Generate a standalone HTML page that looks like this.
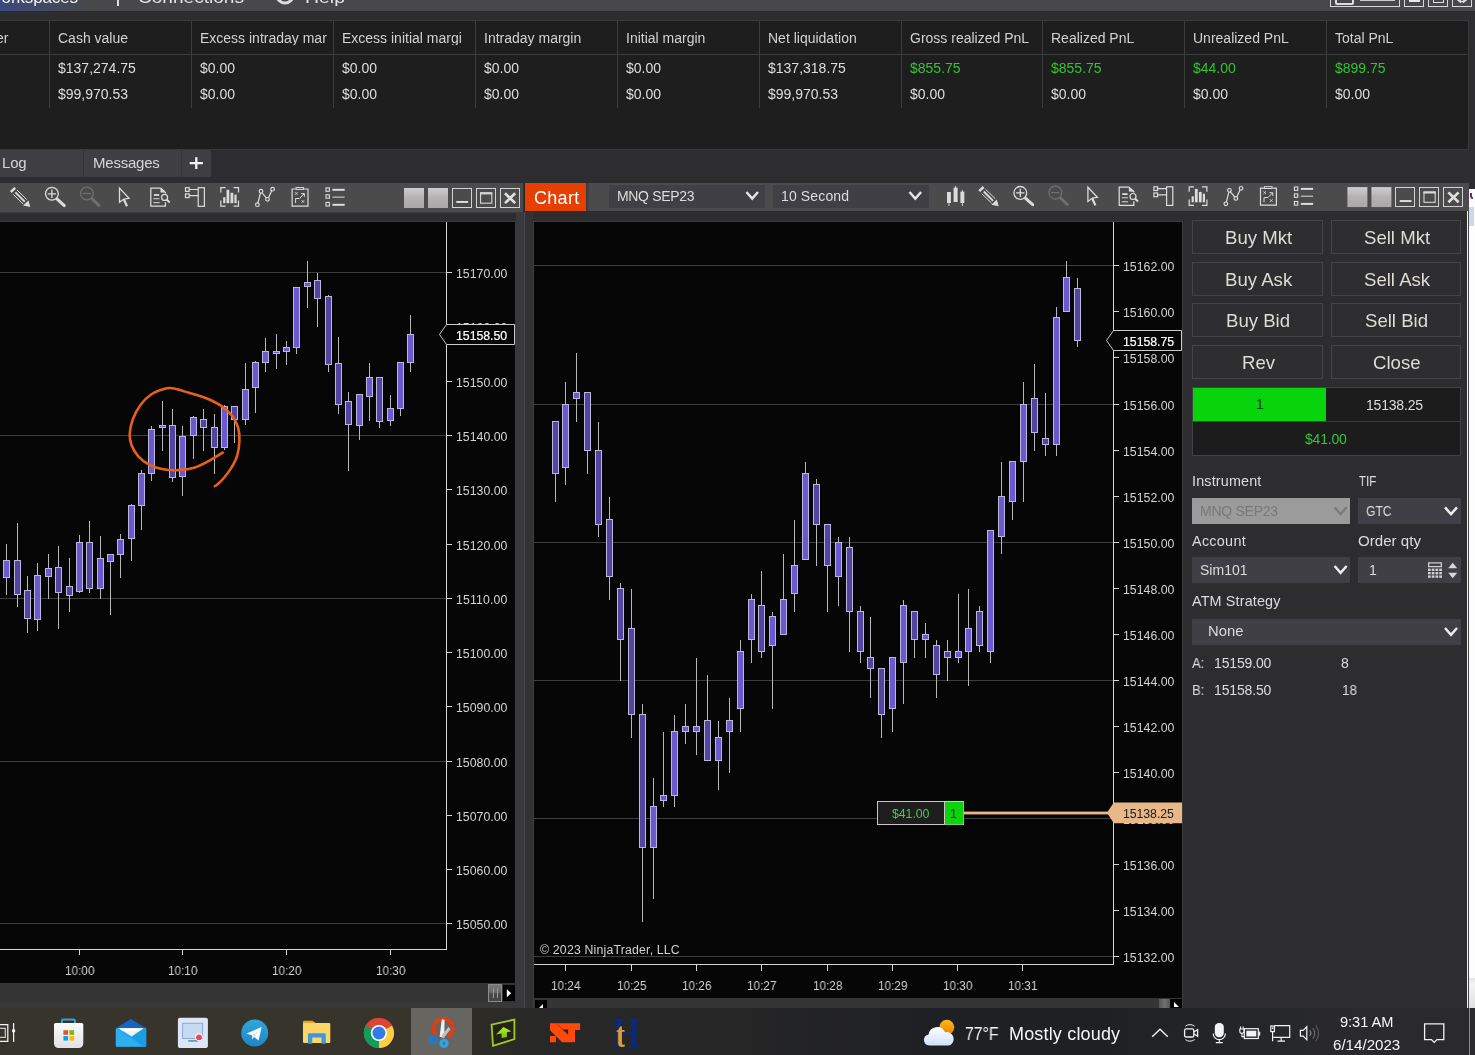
<!DOCTYPE html><html><head><meta charset="utf-8"><title>NinjaTrader</title><style>
*{box-sizing:border-box;margin:0;padding:0}
html,body{width:1475px;height:1055px;overflow:hidden;background:#2d2d30;font-family:"Liberation Sans",sans-serif;}
.abs{position:absolute}
#root{position:relative;width:1475px;height:1055px;overflow:hidden;background:#2d2d30}
.t{position:absolute;white-space:nowrap;color:#d0d0d0;line-height:1;will-change:transform}
.btn{position:absolute;border:1px solid #444446;background:#2e2e31}
.combo{position:absolute;background:#3f3f45}
</style></head><body><div id="root">
<div class="abs" style="left:0;top:0;width:1475px;height:11px;background:#48484a"></div>
<div class="abs" style="left:0;top:0;width:90px;height:11px;background:linear-gradient(90deg,#3b4a7c,#48484a)"></div>
<div class="t" style="left:-14.00px;top:-11.00px;font-size:17px;color:#f4f4f4;letter-spacing:-0.136px;">Workspaces</div>
<div class="abs" style="left:117px;top:0;width:2px;height:6px;background:#ddd"></div>
<div class="t" style="left:138.00px;top:-11.00px;font-size:17px;color:#e4e4e4;transform:scaleX(1.1216);transform-origin:0 0;">Connections</div>
<div class="t" style="left:305.00px;top:-11.00px;font-size:17px;color:#e4e4e4;transform:scaleX(1.1440);transform-origin:0 0;">Help</div>
<svg class="abs" style="left:272px;top:-14px" width="26" height="22" viewBox="0 0 26 22"><circle cx="13" cy="9" r="8" fill="none" stroke="#ddd" stroke-width="3"/></svg>
<svg class="abs" style="left:1325px;top:0" width="150" height="10" viewBox="0 0 150 10" shape-rendering="crispEdges"><g fill="none" stroke="#d8d8d8" stroke-width="1"><rect x="5.5" y="-5.5" width="69" height="12"/><rect x="79.5" y="-5.5" width="19" height="12"/><rect x="103.5" y="-5.5" width="19" height="12"/><rect x="127.5" y="-5.5" width="19" height="12"/></g><rect x="11" y="-4" width="17" height="8" rx="1" fill="none" stroke="#ddd" stroke-width="2" shape-rendering="auto"/><rect x="35" y="0" width="35" height="1" fill="#eee" opacity="0.8"/><rect x="83.5" y="0" width="11" height="2" fill="#e8e8e8"/><rect x="108.5" y="-3" width="10" height="5" fill="none" stroke="#ddd"/><path d="M132.5 -1l4 3.4M141.5 -1l-4 3.4" stroke="#ddd" stroke-width="2.5" shape-rendering="auto"/></svg>
<div class="abs" style="left:-2px;top:20px;width:1471px;height:130px;background:#1e1e1e;border:1px solid #39393b"></div>
<div class="abs" style="left:49px;top:21px;width:1px;height:87px;background:#3d3d3d"></div>
<div class="abs" style="left:191px;top:21px;width:1px;height:87px;background:#3d3d3d"></div>
<div class="abs" style="left:333px;top:21px;width:1px;height:87px;background:#3d3d3d"></div>
<div class="abs" style="left:475px;top:21px;width:1px;height:87px;background:#3d3d3d"></div>
<div class="abs" style="left:617px;top:21px;width:1px;height:87px;background:#3d3d3d"></div>
<div class="abs" style="left:759px;top:21px;width:1px;height:87px;background:#3d3d3d"></div>
<div class="abs" style="left:901px;top:21px;width:1px;height:87px;background:#3d3d3d"></div>
<div class="abs" style="left:1042px;top:21px;width:1px;height:87px;background:#3d3d3d"></div>
<div class="abs" style="left:1184px;top:21px;width:1px;height:87px;background:#3d3d3d"></div>
<div class="abs" style="left:1326px;top:21px;width:1px;height:87px;background:#3d3d3d"></div>
<div class="abs" style="left:0;top:54px;width:1467px;height:1px;background:#3d3d3d"></div>
<div class="t" style="left:-4.00px;top:31.00px;font-size:14px;color:#d2d2d2;">er</div>
<div class="t" style="left:57.80px;top:31.00px;font-size:14px;color:#d2d2d2;">Cash value</div>
<div class="t" style="left:57.80px;top:61.00px;font-size:14px;color:#dedede;">$137,274.75</div>
<div class="t" style="left:57.80px;top:87.00px;font-size:14px;color:#dedede;">$99,970.53</div>
<div class="t" style="left:199.80px;top:31.00px;font-size:14px;color:#d2d2d2;max-width:129px;overflow:hidden;">Excess intraday mar</div>
<div class="t" style="left:199.80px;top:61.00px;font-size:14px;color:#dedede;">$0.00</div>
<div class="t" style="left:199.80px;top:87.00px;font-size:14px;color:#dedede;">$0.00</div>
<div class="t" style="left:341.80px;top:31.00px;font-size:14px;color:#d2d2d2;max-width:129px;overflow:hidden;">Excess initial margi</div>
<div class="t" style="left:341.80px;top:61.00px;font-size:14px;color:#dedede;">$0.00</div>
<div class="t" style="left:341.80px;top:87.00px;font-size:14px;color:#dedede;">$0.00</div>
<div class="t" style="left:483.80px;top:31.00px;font-size:14px;color:#d2d2d2;">Intraday margin</div>
<div class="t" style="left:483.80px;top:61.00px;font-size:14px;color:#dedede;">$0.00</div>
<div class="t" style="left:483.80px;top:87.00px;font-size:14px;color:#dedede;">$0.00</div>
<div class="t" style="left:625.80px;top:31.00px;font-size:14px;color:#d2d2d2;">Initial margin</div>
<div class="t" style="left:625.80px;top:61.00px;font-size:14px;color:#dedede;">$0.00</div>
<div class="t" style="left:625.80px;top:87.00px;font-size:14px;color:#dedede;">$0.00</div>
<div class="t" style="left:767.80px;top:31.00px;font-size:14px;color:#d2d2d2;">Net liquidation</div>
<div class="t" style="left:767.80px;top:61.00px;font-size:14px;color:#dedede;">$137,318.75</div>
<div class="t" style="left:767.80px;top:87.00px;font-size:14px;color:#dedede;">$99,970.53</div>
<div class="t" style="left:909.80px;top:31.00px;font-size:14px;color:#d2d2d2;">Gross realized PnL</div>
<div class="t" style="left:909.80px;top:61.00px;font-size:14px;color:#33c233;">$855.75</div>
<div class="t" style="left:909.80px;top:87.00px;font-size:14px;color:#dedede;">$0.00</div>
<div class="t" style="left:1050.80px;top:31.00px;font-size:14px;color:#d2d2d2;">Realized PnL</div>
<div class="t" style="left:1050.80px;top:61.00px;font-size:14px;color:#33c233;">$855.75</div>
<div class="t" style="left:1050.80px;top:87.00px;font-size:14px;color:#dedede;">$0.00</div>
<div class="t" style="left:1192.80px;top:31.00px;font-size:14px;color:#d2d2d2;">Unrealized PnL</div>
<div class="t" style="left:1192.80px;top:61.00px;font-size:14px;color:#33c233;">$44.00</div>
<div class="t" style="left:1192.80px;top:87.00px;font-size:14px;color:#dedede;">$0.00</div>
<div class="t" style="left:1334.80px;top:31.00px;font-size:14px;color:#d2d2d2;">Total PnL</div>
<div class="t" style="left:1334.80px;top:61.00px;font-size:14px;color:#33c233;">$899.75</div>
<div class="t" style="left:1334.80px;top:87.00px;font-size:14px;color:#dedede;">$0.00</div>
<div class="abs" style="left:0;top:150px;width:211px;height:27px;background:#3e3e43"></div>
<div class="abs" style="left:83px;top:150px;width:1px;height:27px;background:#34343a"></div>
<div class="abs" style="left:181px;top:150px;width:1px;height:27px;background:#34343a"></div>
<div class="t" style="left:1.80px;top:155.00px;font-size:15px;color:#d6d6d6;letter-spacing:-0.164px;">Log</div>
<div class="t" style="left:92.50px;top:155.00px;font-size:15px;color:#d6d6d6;letter-spacing:-0.224px;">Messages</div>
<svg class="abs" style="left:189px;top:156px" width="15" height="14"><path d="M7.3 1.2v11.7M0.7 7.05h13.2" stroke="#f2f2f2" stroke-width="2.3" fill="none"/></svg>
<div class="abs" style="left:0;top:183px;width:523px;height:29px;background:#4b4b4c"></div>
<div class="abs" style="left:0;top:212px;width:523px;height:1px;background:#3c3c3e"></div>
<div class="abs" style="left:586px;top:183px;width:883px;height:28px;background:linear-gradient(90deg,#38383a 0,#4b4b4c 4px)"></div>
<div class="abs" style="left:525px;top:183px;width:61px;height:28px;background:#e53f02"></div>
<div class="t" style="left:533.60px;top:189.00px;font-size:18px;color:#ffffff;letter-spacing:0.296px;">Chart</div>
<div class="combo" style="left:609px;top:185px;width:156px;height:23px"></div>
<div class="t" style="left:616.50px;top:189.00px;font-size:14px;color:#dcdcdc;letter-spacing:-0.330px;">MNQ SEP23</div>
<div class="combo" style="left:773px;top:185px;width:156px;height:23px"></div>
<div class="t" style="left:781.00px;top:189.00px;font-size:14px;color:#dcdcdc;letter-spacing:0.132px;">10 Second</div>
<svg class="abs" style="left:0;top:0" width="1475" height="1055" viewBox="0 0 1475 1055"><defs><linearGradient id="gb" x1="0" y1="0" x2="0" y2="1"><stop offset="0" stop-color="#cfcdcd"/><stop offset="0.5" stop-color="#b3b1b1"/><stop offset="1" stop-color="#aaa8a8"/></linearGradient></defs><g stroke="#dcdcdc" fill="none">
<path d="M10.8 192L15.2 187.9" stroke-width="2.5"/>
<path d="M17.1 190.2L26.8 199.5" stroke-width="1"/>
<path d="M15.4 192.4L24.7 201.7" stroke-width="1.9"/>
<path d="M13.3 194.5L23.2 204" stroke-width="1"/>
<path d="M28.4 200.4L23.0 205.6L30.3 207.1Z" fill="#dcdcdc" stroke="none"/>
</g>
<g stroke="#dcdcdc" fill="none">
<circle cx="51.9" cy="193.8" r="6.4" stroke-width="1.3"/>
<path d="M51.9 189.6v8.4M47.7 193.8h8.4" stroke-width="1.3"/>
<path d="M57.2 199.2L64.3 205.6" stroke-width="3" stroke-linecap="round"/>
</g>
<g stroke="#6f6f6f" fill="none">
<circle cx="86.9" cy="193.5" r="6.4" stroke-width="1.3"/>
<path d="M82.7 193.5h8.4" stroke-width="1.3"/>
<path d="M92.2 199.0L98.9 205.4" stroke-width="3" stroke-linecap="round"/>
</g>
<path d="M119.5 188.1V202.3L124.0 199.0L129.0 198.3Z" fill="none" stroke="#dcdcdc" stroke-width="1.3" stroke-linejoin="miter"/><path d="M123.9 199.4L127.0 206.3" stroke="#dcdcdc" stroke-width="2.2" fill="none"/>
<g stroke="#dcdcdc" fill="none" stroke-width="1.25">
<path d="M160.6 188H150.8V206.2H165.4V202.2M160.6 188L165.4 192.4V193.4"/>
<path d="M160.8 188.2V192.2H165.2Z" fill="#dcdcdc" stroke-width="0.6"/>
<path d="M153.9 195h5.3" stroke-width="1.8"/>
<path d="M153.4 198.7h6.0M153.4 202.7h6.2" stroke-width="1"/>
<circle cx="164.6" cy="197.4" r="3.0" stroke-width="1.2"/>
<path d="M166.7 199.7L169.7 202.5" stroke-width="2"/>
</g>
<g stroke="#dcdcdc" fill="none" stroke-width="1.2">
<rect x="198.2" y="187.7" width="6.2" height="18.6"/>
<rect x="185.5" y="187.7" width="3.7" height="3.7"/>
<rect x="185.5" y="193.9" width="3.7" height="3.7"/>
<path d="M189.2 189.5h9M189.2 195.7h9"/>
</g>
<g stroke="#dcdcdc" fill="none" stroke-width="1.2">
<path d="M225.6 187.7H220.8V192.6M220.8 200.5V206.2H225.6M233.6 187.7H238.5V192.6M238.5 200.5V206.2H233.6"/>
</g>
<g fill="#dcdcdc"><rect x="223.2" y="197.2" width="2.2" height="6"/><rect x="226.5" y="189.8" width="2.8" height="13.4"/><rect x="230.5" y="192.8" width="2.8" height="10.4"/><rect x="234.4" y="194.6" width="2.2" height="8.6"/></g>
<g stroke="#dcdcdc" fill="none" stroke-width="1.2">
<path d="M257.9 203L260.5 193M262 192.8L266.4 197.9M268.5 197.7L271.6 190.8"/>
<circle cx="257.4" cy="204.7" r="1.8"/><circle cx="261" cy="191.2" r="1.8"/><circle cx="267.5" cy="199.3" r="1.8"/><circle cx="272.6" cy="189.2" r="1.8"/>
</g>
<g stroke="#dcdcdc" fill="none" stroke-width="1.2">
<path d="M295.6 189H292.1V206.1H308V189H304"/>
<rect x="296" y="187.6" width="7.6" height="1.8" stroke-width="1"/>
<path d="M295 192.2l2.6 2.6M297.6 192.2l-2.6 2.6M301.6 200.2l2.6 2.6M304.2 200.2l-2.6 2.6" stroke-width="0.9"/>
<path d="M295.6 203V198.5H299.5L304 194M301.2 193.6H304.4V196.8" stroke-width="1"/>
</g>
<g stroke="#dcdcdc" fill="none" stroke-width="1.1">
<rect x="326" y="187.9" width="3.4" height="3.4"/><rect x="326" y="194.8" width="3.4" height="3.4"/><rect x="326" y="202.4" width="3.4" height="3.6"/>
<path d="M332.4 189.8h12.3" stroke-width="2"/><path d="M332.4 197.1h12.3" stroke-width="1"/><path d="M332.4 204.8h12.3" stroke-width="2"/>
</g><g transform="translate(0,0)">
<rect x="404" y="188" width="20" height="20" fill="url(#gb)"/><rect x="428" y="188" width="20" height="20" fill="url(#gb)"/>
<g fill="none" stroke="#d2d2d2" stroke-width="1" shape-rendering="crispEdges"><rect x="452.5" y="188.5" width="19" height="19"/><rect x="476.5" y="188.5" width="19" height="19"/><rect x="500.5" y="188.5" width="19" height="19"/></g>
<rect x="456.3" y="201" width="11.8" height="1.9" fill="#e0e0e0"/>
<rect x="480.6" y="193.2" width="11.2" height="10" fill="none" stroke="#d8d8d8" stroke-width="1.1"/><rect x="480" y="192.2" width="12.3" height="2.2" fill="#d8d8d8"/>
<path d="M505 193.3l10.2 9.8M515.2 193.3l-10.2 9.8" stroke="#e0e0e0" stroke-width="2.7" fill="none"/>
</g><g transform="translate(968.4,-0.9)"><g stroke="#dcdcdc" fill="none">
<path d="M10.8 192L15.2 187.9" stroke-width="2.5"/>
<path d="M17.1 190.2L26.8 199.5" stroke-width="1"/>
<path d="M15.4 192.4L24.7 201.7" stroke-width="1.9"/>
<path d="M13.3 194.5L23.2 204" stroke-width="1"/>
<path d="M28.4 200.4L23.0 205.6L30.3 207.1Z" fill="#dcdcdc" stroke="none"/>
</g>
<g stroke="#dcdcdc" fill="none">
<circle cx="51.9" cy="193.8" r="6.4" stroke-width="1.3"/>
<path d="M51.9 189.6v8.4M47.7 193.8h8.4" stroke-width="1.3"/>
<path d="M57.2 199.2L64.3 205.6" stroke-width="3" stroke-linecap="round"/>
</g>
<g stroke="#6f6f6f" fill="none">
<circle cx="86.9" cy="193.5" r="6.4" stroke-width="1.3"/>
<path d="M82.7 193.5h8.4" stroke-width="1.3"/>
<path d="M92.2 199.0L98.9 205.4" stroke-width="3" stroke-linecap="round"/>
</g>
<path d="M119.5 188.1V202.3L124.0 199.0L129.0 198.3Z" fill="none" stroke="#dcdcdc" stroke-width="1.3" stroke-linejoin="miter"/><path d="M123.9 199.4L127.0 206.3" stroke="#dcdcdc" stroke-width="2.2" fill="none"/>
<g stroke="#dcdcdc" fill="none" stroke-width="1.25">
<path d="M160.6 188H150.8V206.2H165.4V202.2M160.6 188L165.4 192.4V193.4"/>
<path d="M160.8 188.2V192.2H165.2Z" fill="#dcdcdc" stroke-width="0.6"/>
<path d="M153.9 195h5.3" stroke-width="1.8"/>
<path d="M153.4 198.7h6.0M153.4 202.7h6.2" stroke-width="1"/>
<circle cx="164.6" cy="197.4" r="3.0" stroke-width="1.2"/>
<path d="M166.7 199.7L169.7 202.5" stroke-width="2"/>
</g>
<g stroke="#dcdcdc" fill="none" stroke-width="1.2">
<rect x="198.2" y="187.7" width="6.2" height="18.6"/>
<rect x="185.5" y="187.7" width="3.7" height="3.7"/>
<rect x="185.5" y="193.9" width="3.7" height="3.7"/>
<path d="M189.2 189.5h9M189.2 195.7h9"/>
</g>
<g stroke="#dcdcdc" fill="none" stroke-width="1.2">
<path d="M225.6 187.7H220.8V192.6M220.8 200.5V206.2H225.6M233.6 187.7H238.5V192.6M238.5 200.5V206.2H233.6"/>
</g>
<g fill="#dcdcdc"><rect x="223.2" y="197.2" width="2.2" height="6"/><rect x="226.5" y="189.8" width="2.8" height="13.4"/><rect x="230.5" y="192.8" width="2.8" height="10.4"/><rect x="234.4" y="194.6" width="2.2" height="8.6"/></g>
<g stroke="#dcdcdc" fill="none" stroke-width="1.2">
<path d="M257.9 203L260.5 193M262 192.8L266.4 197.9M268.5 197.7L271.6 190.8"/>
<circle cx="257.4" cy="204.7" r="1.8"/><circle cx="261" cy="191.2" r="1.8"/><circle cx="267.5" cy="199.3" r="1.8"/><circle cx="272.6" cy="189.2" r="1.8"/>
</g>
<g stroke="#dcdcdc" fill="none" stroke-width="1.2">
<path d="M295.6 189H292.1V206.1H308V189H304"/>
<rect x="296" y="187.6" width="7.6" height="1.8" stroke-width="1"/>
<path d="M295 192.2l2.6 2.6M297.6 192.2l-2.6 2.6M301.6 200.2l2.6 2.6M304.2 200.2l-2.6 2.6" stroke-width="0.9"/>
<path d="M295.6 203V198.5H299.5L304 194M301.2 193.6H304.4V196.8" stroke-width="1"/>
</g>
<g stroke="#dcdcdc" fill="none" stroke-width="1.1">
<rect x="326" y="187.9" width="3.4" height="3.4"/><rect x="326" y="194.8" width="3.4" height="3.4"/><rect x="326" y="202.4" width="3.4" height="3.6"/>
<path d="M332.4 189.8h12.3" stroke-width="2"/><path d="M332.4 197.1h12.3" stroke-width="1"/><path d="M332.4 204.8h12.3" stroke-width="2"/>
</g></g><g transform="translate(943.4,-0.9)">
<rect x="404" y="188" width="20" height="20" fill="url(#gb)"/><rect x="428" y="188" width="20" height="20" fill="url(#gb)"/>
<g fill="none" stroke="#d2d2d2" stroke-width="1" shape-rendering="crispEdges"><rect x="452.5" y="188.5" width="19" height="19"/><rect x="476.5" y="188.5" width="19" height="19"/><rect x="500.5" y="188.5" width="19" height="19"/></g>
<rect x="456.3" y="201" width="11.8" height="1.9" fill="#e0e0e0"/>
<rect x="480.6" y="193.2" width="11.2" height="10" fill="none" stroke="#d8d8d8" stroke-width="1.1"/><rect x="480" y="192.2" width="12.3" height="2.2" fill="#d8d8d8"/>
<path d="M505 193.3l10.2 9.8M515.2 193.3l-10.2 9.8" stroke="#e0e0e0" stroke-width="2.7" fill="none"/>
</g><g fill="#dcdcdc"><rect x="947" y="192" width="3.9" height="11"/><rect x="948.5" y="203" width="0.9" height="3"/>
<rect x="953.6" y="187.6" width="4" height="14.4"/><rect x="955.2" y="185.9" width="0.9" height="2"/>
<rect x="960.4" y="191.6" width="3.9" height="11.4"/><rect x="961.9" y="190" width="0.9" height="16"/></g><path d="M746.4 192l5.8 6.6l5.8 -6.6" fill="none" stroke="#e6e6e6" stroke-width="2.4"/><path d="M909.5 192l5.8 6.6l5.8 -6.6" fill="none" stroke="#e6e6e6" stroke-width="2.4"/></svg>
<div class="abs" style="left:0;top:221px;width:516px;height:763px;background:#3a3a3a"></div>
<div class="abs" style="left:0;top:222px;width:515px;height:761px;background:#060606"></div>
<div class="abs" style="left:516px;top:213px;width:8px;height:795px;background:#39393b"></div>
<div class="abs" style="left:524px;top:212px;width:1px;height:796px;background:#48484a"></div>
<div class="abs" style="left:525px;top:212px;width:8px;height:796px;background:#323235"></div>
<div class="abs" style="left:533px;top:221px;width:650px;height:787px;background:#3c3c3c"></div>
<div class="abs" style="left:534px;top:222px;width:648px;height:776px;background:#060606"></div>
<svg class="abs" style="left:0;top:0" width="1475" height="1055" viewBox="0 0 1475 1055" shape-rendering="crispEdges">
<rect x="0" y="272" width="446" height="1" fill="#3d3d3d"/>
<rect x="0" y="435" width="446" height="1" fill="#3d3d3d"/>
<rect x="0" y="598" width="446" height="1" fill="#3d3d3d"/>
<rect x="0" y="761" width="446" height="1" fill="#3d3d3d"/>
<rect x="0" y="923" width="446" height="1" fill="#3d3d3d"/>
<rect x="534" y="265" width="579" height="1" fill="#3d3d3d"/>
<rect x="534" y="404" width="579" height="1" fill="#3d3d3d"/>
<rect x="534" y="542" width="579" height="1" fill="#3d3d3d"/>
<rect x="534" y="680" width="579" height="1" fill="#3d3d3d"/>
<rect x="534" y="818" width="579" height="1" fill="#3d3d3d"/>
<rect x="534" y="956" width="579" height="1" fill="#3d3d3d"/>
<rect x="6" y="544" width="1" height="51" fill="#b8b8ba"/>
<rect x="3" y="560" width="7" height="18" fill="#bab7da"/>
<rect x="4" y="561" width="5" height="16" fill="#6a5acd"/>
<rect x="17" y="523" width="1" height="84" fill="#b8b8ba"/>
<rect x="14" y="560" width="7" height="35" fill="#bab7da"/>
<rect x="15" y="561" width="5" height="33" fill="#5145a0"/>
<rect x="27" y="576" width="1" height="57" fill="#b8b8ba"/>
<rect x="24" y="590" width="7" height="29" fill="#bab7da"/>
<rect x="25" y="591" width="5" height="27" fill="#5145a0"/>
<rect x="37" y="563" width="1" height="68" fill="#b8b8ba"/>
<rect x="34" y="575" width="7" height="45" fill="#bab7da"/>
<rect x="35" y="576" width="5" height="43" fill="#6a5acd"/>
<rect x="48" y="554" width="1" height="45" fill="#b8b8ba"/>
<rect x="45" y="568" width="7" height="9" fill="#bab7da"/>
<rect x="46" y="569" width="5" height="7" fill="#6a5acd"/>
<rect x="58" y="546" width="1" height="83" fill="#b8b8ba"/>
<rect x="55" y="567" width="7" height="26" fill="#bab7da"/>
<rect x="56" y="568" width="5" height="24" fill="#5145a0"/>
<rect x="69" y="558" width="1" height="54" fill="#b8b8ba"/>
<rect x="66" y="586" width="7" height="10" fill="#bab7da"/>
<rect x="67" y="587" width="5" height="8" fill="#5145a0"/>
<rect x="79" y="535" width="1" height="58" fill="#b8b8ba"/>
<rect x="76" y="542" width="7" height="50" fill="#bab7da"/>
<rect x="77" y="543" width="5" height="48" fill="#6a5acd"/>
<rect x="89" y="521" width="1" height="72" fill="#b8b8ba"/>
<rect x="86" y="542" width="7" height="47" fill="#bab7da"/>
<rect x="87" y="543" width="5" height="45" fill="#5145a0"/>
<rect x="100" y="536" width="1" height="63" fill="#b8b8ba"/>
<rect x="97" y="558" width="7" height="31" fill="#bab7da"/>
<rect x="98" y="559" width="5" height="29" fill="#6a5acd"/>
<rect x="110" y="554" width="1" height="61" fill="#b8b8ba"/>
<rect x="107" y="554" width="7" height="8" fill="#bab7da"/>
<rect x="108" y="555" width="5" height="6" fill="#6a5acd"/>
<rect x="120" y="534" width="1" height="44" fill="#b8b8ba"/>
<rect x="117" y="539" width="7" height="16" fill="#bab7da"/>
<rect x="118" y="540" width="5" height="14" fill="#6a5acd"/>
<rect x="131" y="504" width="1" height="57" fill="#b8b8ba"/>
<rect x="128" y="505" width="7" height="34" fill="#bab7da"/>
<rect x="129" y="506" width="5" height="32" fill="#6a5acd"/>
<rect x="141" y="470" width="1" height="60" fill="#b8b8ba"/>
<rect x="138" y="473" width="7" height="33" fill="#bab7da"/>
<rect x="139" y="474" width="5" height="31" fill="#6a5acd"/>
<rect x="151" y="426" width="1" height="55" fill="#b8b8ba"/>
<rect x="148" y="429" width="7" height="45" fill="#bab7da"/>
<rect x="149" y="430" width="5" height="43" fill="#6a5acd"/>
<rect x="162" y="401" width="1" height="50" fill="#b8b8ba"/>
<rect x="159" y="425" width="7" height="3" fill="#bab7da"/>
<rect x="160" y="426" width="5" height="1" fill="#6a5acd"/>
<rect x="172" y="409" width="1" height="73" fill="#b8b8ba"/>
<rect x="169" y="425" width="7" height="53" fill="#bab7da"/>
<rect x="170" y="426" width="5" height="51" fill="#5145a0"/>
<rect x="182" y="426" width="1" height="70" fill="#b8b8ba"/>
<rect x="179" y="436" width="7" height="41" fill="#bab7da"/>
<rect x="180" y="437" width="5" height="39" fill="#6a5acd"/>
<rect x="193" y="416" width="1" height="43" fill="#b8b8ba"/>
<rect x="190" y="417" width="7" height="19" fill="#bab7da"/>
<rect x="191" y="418" width="5" height="17" fill="#6a5acd"/>
<rect x="203" y="409" width="1" height="42" fill="#b8b8ba"/>
<rect x="200" y="419" width="7" height="9" fill="#bab7da"/>
<rect x="201" y="420" width="5" height="7" fill="#5145a0"/>
<rect x="214" y="414" width="1" height="60" fill="#b8b8ba"/>
<rect x="211" y="427" width="7" height="21" fill="#bab7da"/>
<rect x="212" y="428" width="5" height="19" fill="#5145a0"/>
<rect x="224" y="405" width="1" height="45" fill="#b8b8ba"/>
<rect x="221" y="406" width="7" height="42" fill="#bab7da"/>
<rect x="222" y="407" width="5" height="40" fill="#6a5acd"/>
<rect x="234" y="406" width="1" height="37" fill="#b8b8ba"/>
<rect x="231" y="406" width="7" height="14" fill="#bab7da"/>
<rect x="232" y="407" width="5" height="12" fill="#5145a0"/>
<rect x="245" y="363" width="1" height="62" fill="#b8b8ba"/>
<rect x="242" y="389" width="7" height="31" fill="#bab7da"/>
<rect x="243" y="390" width="5" height="29" fill="#6a5acd"/>
<rect x="255" y="361" width="1" height="52" fill="#b8b8ba"/>
<rect x="252" y="362" width="7" height="26" fill="#bab7da"/>
<rect x="253" y="363" width="5" height="24" fill="#6a5acd"/>
<rect x="265" y="338" width="1" height="34" fill="#b8b8ba"/>
<rect x="262" y="351" width="7" height="12" fill="#bab7da"/>
<rect x="263" y="352" width="5" height="10" fill="#6a5acd"/>
<rect x="276" y="334" width="1" height="35" fill="#b8b8ba"/>
<rect x="273" y="351" width="7" height="3" fill="#bab7da"/>
<rect x="274" y="352" width="5" height="1" fill="#6a5acd"/>
<rect x="286" y="341" width="1" height="24" fill="#b8b8ba"/>
<rect x="283" y="347" width="7" height="5" fill="#bab7da"/>
<rect x="284" y="348" width="5" height="3" fill="#6a5acd"/>
<rect x="296" y="287" width="1" height="67" fill="#b8b8ba"/>
<rect x="293" y="287" width="7" height="61" fill="#bab7da"/>
<rect x="294" y="288" width="5" height="59" fill="#6a5acd"/>
<rect x="307" y="261" width="1" height="47" fill="#b8b8ba"/>
<rect x="304" y="282" width="7" height="5" fill="#bab7da"/>
<rect x="305" y="283" width="5" height="3" fill="#6a5acd"/>
<rect x="317" y="273" width="1" height="54" fill="#b8b8ba"/>
<rect x="314" y="280" width="7" height="19" fill="#bab7da"/>
<rect x="315" y="281" width="5" height="17" fill="#5145a0"/>
<rect x="328" y="295" width="1" height="77" fill="#b8b8ba"/>
<rect x="325" y="296" width="7" height="69" fill="#bab7da"/>
<rect x="326" y="297" width="5" height="67" fill="#5145a0"/>
<rect x="338" y="337" width="1" height="77" fill="#b8b8ba"/>
<rect x="335" y="363" width="7" height="42" fill="#bab7da"/>
<rect x="336" y="364" width="5" height="40" fill="#5145a0"/>
<rect x="348" y="392" width="1" height="79" fill="#b8b8ba"/>
<rect x="345" y="401" width="7" height="24" fill="#bab7da"/>
<rect x="346" y="402" width="5" height="22" fill="#5145a0"/>
<rect x="359" y="394" width="1" height="46" fill="#b8b8ba"/>
<rect x="356" y="394" width="7" height="32" fill="#bab7da"/>
<rect x="357" y="395" width="5" height="30" fill="#6a5acd"/>
<rect x="369" y="363" width="1" height="58" fill="#b8b8ba"/>
<rect x="366" y="377" width="7" height="20" fill="#bab7da"/>
<rect x="367" y="378" width="5" height="18" fill="#6a5acd"/>
<rect x="379" y="377" width="1" height="51" fill="#b8b8ba"/>
<rect x="376" y="377" width="7" height="45" fill="#bab7da"/>
<rect x="377" y="378" width="5" height="43" fill="#5145a0"/>
<rect x="390" y="395" width="1" height="31" fill="#b8b8ba"/>
<rect x="387" y="408" width="7" height="13" fill="#bab7da"/>
<rect x="388" y="409" width="5" height="11" fill="#6a5acd"/>
<rect x="400" y="362" width="1" height="54" fill="#b8b8ba"/>
<rect x="397" y="362" width="7" height="47" fill="#bab7da"/>
<rect x="398" y="363" width="5" height="45" fill="#6a5acd"/>
<rect x="410" y="315" width="1" height="57" fill="#b8b8ba"/>
<rect x="407" y="334" width="7" height="29" fill="#bab7da"/>
<rect x="408" y="335" width="5" height="27" fill="#6a5acd"/>
<rect x="555" y="421" width="1" height="81" fill="#b8b8ba"/>
<rect x="552" y="421" width="7" height="53" fill="#bab7da"/>
<rect x="553" y="422" width="5" height="51" fill="#5145a0"/>
<rect x="565" y="382" width="1" height="103" fill="#b8b8ba"/>
<rect x="562" y="404" width="7" height="64" fill="#bab7da"/>
<rect x="563" y="405" width="5" height="62" fill="#6a5acd"/>
<rect x="576" y="353" width="1" height="69" fill="#b8b8ba"/>
<rect x="573" y="392" width="7" height="7" fill="#bab7da"/>
<rect x="574" y="393" width="5" height="5" fill="#6a5acd"/>
<rect x="587" y="392" width="1" height="82" fill="#b8b8ba"/>
<rect x="584" y="392" width="7" height="59" fill="#bab7da"/>
<rect x="585" y="393" width="5" height="57" fill="#5145a0"/>
<rect x="598" y="422" width="1" height="115" fill="#b8b8ba"/>
<rect x="595" y="450" width="7" height="75" fill="#bab7da"/>
<rect x="596" y="451" width="5" height="73" fill="#5145a0"/>
<rect x="609" y="497" width="1" height="103" fill="#b8b8ba"/>
<rect x="606" y="519" width="7" height="58" fill="#bab7da"/>
<rect x="607" y="520" width="5" height="56" fill="#5145a0"/>
<rect x="620" y="583" width="1" height="98" fill="#b8b8ba"/>
<rect x="617" y="588" width="7" height="52" fill="#bab7da"/>
<rect x="618" y="589" width="5" height="50" fill="#5145a0"/>
<rect x="631" y="589" width="1" height="149" fill="#b8b8ba"/>
<rect x="628" y="628" width="7" height="87" fill="#bab7da"/>
<rect x="629" y="629" width="5" height="85" fill="#5145a0"/>
<rect x="642" y="704" width="1" height="218" fill="#b8b8ba"/>
<rect x="639" y="714" width="7" height="134" fill="#bab7da"/>
<rect x="640" y="715" width="5" height="132" fill="#5145a0"/>
<rect x="653" y="778" width="1" height="121" fill="#b8b8ba"/>
<rect x="650" y="806" width="7" height="42" fill="#bab7da"/>
<rect x="651" y="807" width="5" height="40" fill="#6a5acd"/>
<rect x="663" y="732" width="1" height="75" fill="#b8b8ba"/>
<rect x="660" y="795" width="7" height="6" fill="#bab7da"/>
<rect x="661" y="796" width="5" height="4" fill="#6a5acd"/>
<rect x="674" y="715" width="1" height="92" fill="#b8b8ba"/>
<rect x="671" y="731" width="7" height="65" fill="#bab7da"/>
<rect x="672" y="732" width="5" height="63" fill="#6a5acd"/>
<rect x="685" y="704" width="1" height="40" fill="#b8b8ba"/>
<rect x="682" y="726" width="7" height="6" fill="#bab7da"/>
<rect x="683" y="727" width="5" height="4" fill="#6a5acd"/>
<rect x="696" y="658" width="1" height="97" fill="#b8b8ba"/>
<rect x="693" y="726" width="7" height="6" fill="#bab7da"/>
<rect x="694" y="727" width="5" height="4" fill="#6a5acd"/>
<rect x="707" y="675" width="1" height="85" fill="#b8b8ba"/>
<rect x="704" y="720" width="7" height="41" fill="#bab7da"/>
<rect x="705" y="721" width="5" height="39" fill="#5145a0"/>
<rect x="718" y="721" width="1" height="69" fill="#b8b8ba"/>
<rect x="715" y="737" width="7" height="24" fill="#bab7da"/>
<rect x="716" y="738" width="5" height="22" fill="#6a5acd"/>
<rect x="729" y="698" width="1" height="75" fill="#b8b8ba"/>
<rect x="726" y="720" width="7" height="12" fill="#bab7da"/>
<rect x="727" y="721" width="5" height="10" fill="#6a5acd"/>
<rect x="740" y="640" width="1" height="92" fill="#b8b8ba"/>
<rect x="737" y="651" width="7" height="58" fill="#bab7da"/>
<rect x="738" y="652" width="5" height="56" fill="#6a5acd"/>
<rect x="751" y="594" width="1" height="69" fill="#b8b8ba"/>
<rect x="748" y="599" width="7" height="41" fill="#bab7da"/>
<rect x="749" y="600" width="5" height="39" fill="#6a5acd"/>
<rect x="761" y="571" width="1" height="87" fill="#b8b8ba"/>
<rect x="758" y="605" width="7" height="47" fill="#bab7da"/>
<rect x="759" y="606" width="5" height="45" fill="#5145a0"/>
<rect x="772" y="612" width="1" height="97" fill="#b8b8ba"/>
<rect x="769" y="616" width="7" height="30" fill="#bab7da"/>
<rect x="770" y="617" width="5" height="28" fill="#6a5acd"/>
<rect x="783" y="554" width="1" height="80" fill="#b8b8ba"/>
<rect x="780" y="599" width="7" height="36" fill="#bab7da"/>
<rect x="781" y="600" width="5" height="34" fill="#6a5acd"/>
<rect x="794" y="520" width="1" height="92" fill="#b8b8ba"/>
<rect x="791" y="565" width="7" height="29" fill="#bab7da"/>
<rect x="792" y="566" width="5" height="27" fill="#6a5acd"/>
<rect x="805" y="462" width="1" height="98" fill="#b8b8ba"/>
<rect x="802" y="473" width="7" height="87" fill="#bab7da"/>
<rect x="803" y="474" width="5" height="85" fill="#6a5acd"/>
<rect x="816" y="479" width="1" height="87" fill="#b8b8ba"/>
<rect x="813" y="484" width="7" height="41" fill="#bab7da"/>
<rect x="814" y="485" width="5" height="39" fill="#5145a0"/>
<rect x="827" y="524" width="1" height="88" fill="#b8b8ba"/>
<rect x="824" y="524" width="7" height="42" fill="#bab7da"/>
<rect x="825" y="525" width="5" height="40" fill="#5145a0"/>
<rect x="838" y="537" width="1" height="69" fill="#b8b8ba"/>
<rect x="835" y="542" width="7" height="35" fill="#bab7da"/>
<rect x="836" y="543" width="5" height="33" fill="#6a5acd"/>
<rect x="849" y="537" width="1" height="115" fill="#b8b8ba"/>
<rect x="846" y="547" width="7" height="65" fill="#bab7da"/>
<rect x="847" y="548" width="5" height="63" fill="#5145a0"/>
<rect x="860" y="606" width="1" height="57" fill="#b8b8ba"/>
<rect x="857" y="611" width="7" height="41" fill="#bab7da"/>
<rect x="858" y="612" width="5" height="39" fill="#5145a0"/>
<rect x="870" y="617" width="1" height="81" fill="#b8b8ba"/>
<rect x="867" y="657" width="7" height="12" fill="#bab7da"/>
<rect x="868" y="658" width="5" height="10" fill="#5145a0"/>
<rect x="881" y="668" width="1" height="70" fill="#b8b8ba"/>
<rect x="878" y="668" width="7" height="47" fill="#bab7da"/>
<rect x="879" y="669" width="5" height="45" fill="#5145a0"/>
<rect x="892" y="657" width="1" height="75" fill="#b8b8ba"/>
<rect x="889" y="657" width="7" height="52" fill="#bab7da"/>
<rect x="890" y="658" width="5" height="50" fill="#6a5acd"/>
<rect x="903" y="600" width="1" height="104" fill="#b8b8ba"/>
<rect x="900" y="605" width="7" height="58" fill="#bab7da"/>
<rect x="901" y="606" width="5" height="56" fill="#6a5acd"/>
<rect x="914" y="611" width="1" height="47" fill="#b8b8ba"/>
<rect x="911" y="611" width="7" height="29" fill="#bab7da"/>
<rect x="912" y="612" width="5" height="27" fill="#5145a0"/>
<rect x="925" y="623" width="1" height="35" fill="#b8b8ba"/>
<rect x="922" y="634" width="7" height="6" fill="#bab7da"/>
<rect x="923" y="635" width="5" height="4" fill="#6a5acd"/>
<rect x="936" y="640" width="1" height="58" fill="#b8b8ba"/>
<rect x="933" y="645" width="7" height="30" fill="#bab7da"/>
<rect x="934" y="646" width="5" height="28" fill="#5145a0"/>
<rect x="947" y="640" width="1" height="41" fill="#b8b8ba"/>
<rect x="944" y="651" width="7" height="7" fill="#bab7da"/>
<rect x="945" y="652" width="5" height="5" fill="#5145a0"/>
<rect x="958" y="594" width="1" height="69" fill="#b8b8ba"/>
<rect x="955" y="651" width="7" height="7" fill="#bab7da"/>
<rect x="956" y="652" width="5" height="5" fill="#6a5acd"/>
<rect x="968" y="589" width="1" height="97" fill="#b8b8ba"/>
<rect x="965" y="628" width="7" height="24" fill="#bab7da"/>
<rect x="966" y="629" width="5" height="22" fill="#6a5acd"/>
<rect x="979" y="606" width="1" height="46" fill="#b8b8ba"/>
<rect x="976" y="611" width="7" height="35" fill="#bab7da"/>
<rect x="977" y="612" width="5" height="33" fill="#5145a0"/>
<rect x="990" y="530" width="1" height="133" fill="#b8b8ba"/>
<rect x="987" y="530" width="7" height="122" fill="#bab7da"/>
<rect x="988" y="531" width="5" height="120" fill="#6a5acd"/>
<rect x="1001" y="462" width="1" height="92" fill="#b8b8ba"/>
<rect x="998" y="496" width="7" height="41" fill="#bab7da"/>
<rect x="999" y="497" width="5" height="39" fill="#6a5acd"/>
<rect x="1012" y="461" width="1" height="59" fill="#b8b8ba"/>
<rect x="1009" y="461" width="7" height="41" fill="#bab7da"/>
<rect x="1010" y="462" width="5" height="39" fill="#6a5acd"/>
<rect x="1023" y="382" width="1" height="120" fill="#b8b8ba"/>
<rect x="1020" y="404" width="7" height="58" fill="#bab7da"/>
<rect x="1021" y="405" width="5" height="56" fill="#6a5acd"/>
<rect x="1034" y="364" width="1" height="87" fill="#b8b8ba"/>
<rect x="1031" y="398" width="7" height="35" fill="#bab7da"/>
<rect x="1032" y="399" width="5" height="33" fill="#5145a0"/>
<rect x="1045" y="393" width="1" height="63" fill="#b8b8ba"/>
<rect x="1042" y="438" width="7" height="7" fill="#bab7da"/>
<rect x="1043" y="439" width="5" height="5" fill="#5145a0"/>
<rect x="1056" y="307" width="1" height="149" fill="#b8b8ba"/>
<rect x="1053" y="317" width="7" height="128" fill="#bab7da"/>
<rect x="1054" y="318" width="5" height="126" fill="#6a5acd"/>
<rect x="1066" y="261" width="1" height="51" fill="#b8b8ba"/>
<rect x="1063" y="277" width="7" height="35" fill="#bab7da"/>
<rect x="1064" y="278" width="5" height="33" fill="#6a5acd"/>
<rect x="1077" y="278" width="1" height="69" fill="#b8b8ba"/>
<rect x="1074" y="288" width="7" height="53" fill="#bab7da"/>
<rect x="1075" y="289" width="5" height="51" fill="#5145a0"/>
<rect x="446" y="222" width="1" height="728" fill="#d6d6d6"/>
<rect x="0" y="949" width="447" height="1" fill="#d6d6d6"/>
<rect x="79" y="950" width="1" height="5" fill="#d6d6d6"/>
<rect x="182" y="950" width="1" height="5" fill="#d6d6d6"/>
<rect x="286" y="950" width="1" height="5" fill="#d6d6d6"/>
<rect x="390" y="950" width="1" height="5" fill="#d6d6d6"/>
<rect x="447" y="272" width="5" height="1" fill="#d6d6d6"/>
<rect x="447" y="326" width="5" height="1" fill="#d6d6d6"/>
<rect x="447" y="381" width="5" height="1" fill="#d6d6d6"/>
<rect x="447" y="435" width="5" height="1" fill="#d6d6d6"/>
<rect x="447" y="489" width="5" height="1" fill="#d6d6d6"/>
<rect x="447" y="544" width="5" height="1" fill="#d6d6d6"/>
<rect x="447" y="598" width="5" height="1" fill="#d6d6d6"/>
<rect x="447" y="652" width="5" height="1" fill="#d6d6d6"/>
<rect x="447" y="706" width="5" height="1" fill="#d6d6d6"/>
<rect x="447" y="761" width="5" height="1" fill="#d6d6d6"/>
<rect x="447" y="815" width="5" height="1" fill="#d6d6d6"/>
<rect x="447" y="869" width="5" height="1" fill="#d6d6d6"/>
<rect x="447" y="923" width="5" height="1" fill="#d6d6d6"/>
<rect x="1113" y="222" width="1" height="743" fill="#d6d6d6"/>
<rect x="534" y="964" width="580" height="1" fill="#d6d6d6"/>
<rect x="565" y="965" width="1" height="6" fill="#d6d6d6"/>
<rect x="631" y="965" width="1" height="6" fill="#d6d6d6"/>
<rect x="696" y="965" width="1" height="6" fill="#d6d6d6"/>
<rect x="761" y="965" width="1" height="6" fill="#d6d6d6"/>
<rect x="827" y="965" width="1" height="6" fill="#d6d6d6"/>
<rect x="892" y="965" width="1" height="6" fill="#d6d6d6"/>
<rect x="957" y="965" width="1" height="6" fill="#d6d6d6"/>
<rect x="1022" y="965" width="1" height="6" fill="#d6d6d6"/>
<rect x="1114" y="265" width="5" height="1" fill="#d6d6d6"/>
<rect x="1114" y="311" width="5" height="1" fill="#d6d6d6"/>
<rect x="1114" y="357" width="5" height="1" fill="#d6d6d6"/>
<rect x="1114" y="404" width="5" height="1" fill="#d6d6d6"/>
<rect x="1114" y="450" width="5" height="1" fill="#d6d6d6"/>
<rect x="1114" y="496" width="5" height="1" fill="#d6d6d6"/>
<rect x="1114" y="542" width="5" height="1" fill="#d6d6d6"/>
<rect x="1114" y="588" width="5" height="1" fill="#d6d6d6"/>
<rect x="1114" y="634" width="5" height="1" fill="#d6d6d6"/>
<rect x="1114" y="680" width="5" height="1" fill="#d6d6d6"/>
<rect x="1114" y="726" width="5" height="1" fill="#d6d6d6"/>
<rect x="1114" y="772" width="5" height="1" fill="#d6d6d6"/>
<rect x="1114" y="818" width="5" height="1" fill="#d6d6d6"/>
<rect x="1114" y="864" width="5" height="1" fill="#d6d6d6"/>
<rect x="1114" y="910" width="5" height="1" fill="#d6d6d6"/>
<rect x="1114" y="956" width="5" height="1" fill="#d6d6d6"/>
</svg>
<div class="t" style="left:455.80px;top:268.00px;font-size:12.3px;color:#d4d4d4;letter-spacing:0.014px;">15170.00</div>
<div class="t" style="left:455.80px;top:322.00px;font-size:12.3px;color:#d4d4d4;letter-spacing:0.014px;">15160.00</div>
<div class="t" style="left:455.80px;top:377.00px;font-size:12.3px;color:#d4d4d4;letter-spacing:0.014px;">15150.00</div>
<div class="t" style="left:455.80px;top:431.00px;font-size:12.3px;color:#d4d4d4;letter-spacing:0.014px;">15140.00</div>
<div class="t" style="left:455.80px;top:485.00px;font-size:12.3px;color:#d4d4d4;letter-spacing:0.014px;">15130.00</div>
<div class="t" style="left:455.80px;top:540.00px;font-size:12.3px;color:#d4d4d4;letter-spacing:0.014px;">15120.00</div>
<div class="t" style="left:455.80px;top:594.00px;font-size:12.3px;color:#d4d4d4;letter-spacing:0.144px;">15110.00</div>
<div class="t" style="left:455.80px;top:648.00px;font-size:12.3px;color:#d4d4d4;letter-spacing:0.014px;">15100.00</div>
<div class="t" style="left:455.80px;top:702.00px;font-size:12.3px;color:#d4d4d4;letter-spacing:0.014px;">15090.00</div>
<div class="t" style="left:455.80px;top:757.00px;font-size:12.3px;color:#d4d4d4;letter-spacing:0.014px;">15080.00</div>
<div class="t" style="left:455.80px;top:811.00px;font-size:12.3px;color:#d4d4d4;letter-spacing:0.014px;">15070.00</div>
<div class="t" style="left:455.80px;top:865.00px;font-size:12.3px;color:#d4d4d4;letter-spacing:0.014px;">15060.00</div>
<div class="t" style="left:455.80px;top:919.00px;font-size:12.3px;color:#d4d4d4;letter-spacing:0.014px;">15050.00</div>
<div class="t" style="left:1122.80px;top:261.00px;font-size:12.3px;color:#d4d4d4;letter-spacing:0.014px;">15162.00</div>
<div class="t" style="left:1122.80px;top:307.00px;font-size:12.3px;color:#d4d4d4;letter-spacing:0.014px;">15160.00</div>
<div class="t" style="left:1122.80px;top:353.00px;font-size:12.3px;color:#d4d4d4;letter-spacing:0.014px;">15158.00</div>
<div class="t" style="left:1122.80px;top:400.00px;font-size:12.3px;color:#d4d4d4;letter-spacing:0.014px;">15156.00</div>
<div class="t" style="left:1122.80px;top:446.00px;font-size:12.3px;color:#d4d4d4;letter-spacing:0.014px;">15154.00</div>
<div class="t" style="left:1122.80px;top:492.00px;font-size:12.3px;color:#d4d4d4;letter-spacing:0.014px;">15152.00</div>
<div class="t" style="left:1122.80px;top:538.00px;font-size:12.3px;color:#d4d4d4;letter-spacing:0.014px;">15150.00</div>
<div class="t" style="left:1122.80px;top:584.00px;font-size:12.3px;color:#d4d4d4;letter-spacing:0.014px;">15148.00</div>
<div class="t" style="left:1122.80px;top:630.00px;font-size:12.3px;color:#d4d4d4;letter-spacing:0.014px;">15146.00</div>
<div class="t" style="left:1122.80px;top:676.00px;font-size:12.3px;color:#d4d4d4;letter-spacing:0.014px;">15144.00</div>
<div class="t" style="left:1122.80px;top:722.00px;font-size:12.3px;color:#d4d4d4;letter-spacing:0.014px;">15142.00</div>
<div class="t" style="left:1122.80px;top:768.00px;font-size:12.3px;color:#d4d4d4;letter-spacing:0.014px;">15140.00</div>
<div class="t" style="left:1122.80px;top:814.00px;font-size:12.3px;color:#d4d4d4;letter-spacing:0.014px;">15138.00</div>
<div class="t" style="left:1122.80px;top:860.00px;font-size:12.3px;color:#d4d4d4;letter-spacing:0.014px;">15136.00</div>
<div class="t" style="left:1122.80px;top:906.00px;font-size:12.3px;color:#d4d4d4;letter-spacing:0.014px;">15134.00</div>
<div class="t" style="left:1122.80px;top:952.00px;font-size:12.3px;color:#d4d4d4;letter-spacing:0.014px;">15132.00</div>
<svg class="abs" style="left:0;top:0" width="1475" height="1055" viewBox="0 0 1475 1055">
<path d="M222.8 452.6C220.4 454.0 213.2 458.7 208.6 461.2C204.0 463.7 199.9 465.9 195.0 467.4C190.1 468.9 184.3 469.8 179.0 470.1C173.7 470.4 167.9 470.1 163.0 469.2C158.1 468.3 153.5 467.0 149.4 464.9C145.3 462.8 141.3 459.6 138.3 456.3C135.3 453.0 133.0 448.9 131.6 445.2C130.2 441.5 129.5 438.4 129.7 434.1C129.9 429.8 131.0 424.2 132.8 419.3C134.7 414.4 137.6 408.7 140.8 404.5C144.0 400.3 147.8 396.7 151.9 394.0C156.0 391.3 161.8 389.4 165.5 388.5C169.2 387.6 170.2 387.8 174.1 388.5C178.0 389.2 183.6 391.2 188.9 392.8C194.2 394.4 200.8 396.2 206.1 398.3C211.4 400.4 216.6 402.8 220.9 405.7C225.2 408.6 229.1 411.9 232.0 415.6C234.9 419.3 237.0 423.6 238.2 427.9C239.4 432.2 239.6 436.8 239.4 441.5C239.2 446.2 238.4 451.8 237.0 456.3C235.6 460.8 233.1 464.9 230.8 468.6C228.5 472.3 225.7 475.8 223.4 478.5C221.1 481.2 218.6 483.3 217.2 484.6C215.8 485.9 215.2 485.9 214.8 486.1" fill="none" stroke="#e8601a" stroke-width="2.6" stroke-linecap="round" stroke-linejoin="round"/>
<path d="M446.5 324.5H514.5V344.5H446.5L439.5 334.5Z" fill="#060606" stroke="#cacaca" stroke-width="1"/>
<path d="M1113.5 330.5H1181.5V350.5H1113.5L1106.5 340.5Z" fill="#060606" stroke="#cacaca" stroke-width="1"/>
<rect x="963.5" y="811.6" width="145" height="2.8" fill="#edb685"/>
<path d="M1113.8 802.4H1182V823.2H1113.8L1107 812.8Z" fill="#e9b888"/>
<rect x="877.5" y="801.5" width="86" height="23" fill="#1e1e1e" stroke="#c8c8c8"/>
<rect x="944.5" y="802" width="19" height="22.5" fill="#0fd20f"/>
<path d="M944.5 802V824.5" stroke="#c8c8c8"/>
</svg>
<div class="t" style="left:456.00px;top:330.00px;font-size:12.3px;color:#ffffff;letter-spacing:-0.015px;-webkit-text-stroke:0.2px #fff;">15158.50</div>
<div class="t" style="left:1122.80px;top:336.00px;font-size:12.3px;color:#ffffff;letter-spacing:-0.015px;-webkit-text-stroke:0.2px #fff;">15158.75</div>
<div class="t" style="left:1123.40px;top:808.00px;font-size:12.3px;color:#1a1a1a;letter-spacing:-0.058px;">15138.25</div>
<div class="t" style="left:65.40px;top:965.00px;font-size:12.3px;color:#d4d4d4;transform:scaleX(0.9551);transform-origin:0 0;">10:00</div>
<div class="t" style="left:168.40px;top:965.00px;font-size:12.3px;color:#d4d4d4;transform:scaleX(0.9551);transform-origin:0 0;">10:10</div>
<div class="t" style="left:272.40px;top:965.00px;font-size:12.3px;color:#d4d4d4;transform:scaleX(0.9551);transform-origin:0 0;">10:20</div>
<div class="t" style="left:376.40px;top:965.00px;font-size:12.3px;color:#d4d4d4;transform:scaleX(0.9551);transform-origin:0 0;">10:30</div>
<div class="t" style="left:551.30px;top:980.00px;font-size:12.3px;color:#d4d4d4;transform:scaleX(0.9551);transform-origin:0 0;">10:24</div>
<div class="t" style="left:617.30px;top:980.00px;font-size:12.3px;color:#d4d4d4;transform:scaleX(0.9551);transform-origin:0 0;">10:25</div>
<div class="t" style="left:682.30px;top:980.00px;font-size:12.3px;color:#d4d4d4;transform:scaleX(0.9551);transform-origin:0 0;">10:26</div>
<div class="t" style="left:747.30px;top:980.00px;font-size:12.3px;color:#d4d4d4;transform:scaleX(0.9551);transform-origin:0 0;">10:27</div>
<div class="t" style="left:813.30px;top:980.00px;font-size:12.3px;color:#d4d4d4;transform:scaleX(0.9551);transform-origin:0 0;">10:28</div>
<div class="t" style="left:878.30px;top:980.00px;font-size:12.3px;color:#d4d4d4;transform:scaleX(0.9551);transform-origin:0 0;">10:29</div>
<div class="t" style="left:943.30px;top:980.00px;font-size:12.3px;color:#d4d4d4;transform:scaleX(0.9551);transform-origin:0 0;">10:30</div>
<div class="t" style="left:1008.30px;top:980.00px;font-size:12.3px;color:#d4d4d4;transform:scaleX(0.9551);transform-origin:0 0;">10:31</div>
<div class="t" style="left:539.50px;top:944.00px;font-size:12.3px;color:#d2d2d2;letter-spacing:0.182px;">© 2023 NinjaTrader, LLC</div>
<div class="t" style="left:892.40px;top:808.00px;font-size:12.3px;color:#3fd23f;letter-spacing:-0.044px;">$41.00</div>
<div class="t" style="left:950.30px;top:808.00px;font-size:12.3px;color:#0a3a0a;">1</div>
<div class="abs" style="left:0;top:983px;width:516px;height:20px;background:#353535"></div>
<div class="abs" style="left:0;top:1003px;width:524px;height:5px;background:#38383a"></div>
<div class="abs" style="left:488px;top:984px;width:14px;height:18px;background:linear-gradient(#7a7a7a,#6a6a6a 45%,#484848 55%,#444);border:1px solid #8a8a8a"></div>
<div class="abs" style="left:493px;top:988px;width:1px;height:10px;background:#999"></div><div class="abs" style="left:497px;top:988px;width:1px;height:10px;background:#999"></div>
<div class="abs" style="left:503px;top:985px;width:12px;height:16px;background:#000"></div>
<svg class="abs" style="left:503px;top:985px" width="12" height="16"><path d="M3.8 4.2l4.4 4-4.4 4z" fill="#fff"/></svg>
<div class="abs" style="left:534px;top:998px;width:648px;height:10px;background:#353535"></div>
<div class="abs" style="left:535px;top:1000px;width:12px;height:8px;background:#000"></div>
<svg class="abs" style="left:535px;top:1000px" width="12" height="8"><path d="M4 8l4-4v4z" fill="#fff"/></svg>
<div class="abs" style="left:1159px;top:999px;width:11px;height:9px;background:linear-gradient(90deg,#555,#707070,#555)"></div>
<div class="abs" style="left:1170px;top:999px;width:12px;height:9px;background:#000"></div>
<svg class="abs" style="left:1170px;top:999px" width="12" height="9"><path d="M4 3l5 5h-5z" fill="#fff"/></svg>
<div class="btn" style="left:1192px;top:220px;width:131px;height:34px"></div>
<div class="btn" style="left:1331px;top:220px;width:130px;height:34px"></div>
<div class="t" style="left:1224.71px;top:229.00px;font-size:18.6px;color:#dedcd4;">Buy Mkt</div>
<div class="t" style="left:1363.53px;top:229.00px;font-size:18.6px;color:#dedcd4;">Sell Mkt</div>
<div class="btn" style="left:1192px;top:262px;width:131px;height:34px"></div>
<div class="btn" style="left:1331px;top:262px;width:130px;height:34px"></div>
<div class="t" style="left:1224.70px;top:271.00px;font-size:18.6px;color:#dedcd4;">Buy Ask</div>
<div class="t" style="left:1363.52px;top:271.00px;font-size:18.6px;color:#dedcd4;">Sell Ask</div>
<div class="btn" style="left:1192px;top:303px;width:131px;height:34px"></div>
<div class="btn" style="left:1331px;top:303px;width:130px;height:34px"></div>
<div class="t" style="left:1226.25px;top:312.00px;font-size:18.6px;color:#dedcd4;">Buy Bid</div>
<div class="t" style="left:1365.07px;top:312.00px;font-size:18.6px;color:#dedcd4;">Sell Bid</div>
<div class="btn" style="left:1192px;top:345px;width:131px;height:34px"></div>
<div class="btn" style="left:1331px;top:345px;width:130px;height:34px"></div>
<div class="t" style="left:1241.76px;top:354.00px;font-size:18.6px;color:#dedcd4;">Rev</div>
<div class="t" style="left:1372.82px;top:354.00px;font-size:18.6px;color:#dedcd4;">Close</div>
<div class="abs" style="left:1192px;top:387px;width:269px;height:69px;background:#1c1c1c;border:1px solid #424244"></div>
<div class="abs" style="left:1193px;top:388px;width:133px;height:33px;background:#07d40b"></div>
<div class="abs" style="left:1193px;top:421px;width:267px;height:1px;background:#3c3c3c"></div>
<div class="t" style="left:1255.81px;top:397.00px;font-size:14px;color:#0a4210;">1</div>
<div class="t" style="left:1365.50px;top:398.00px;font-size:14px;color:#dcdcdc;letter-spacing:-0.199px;">15138.25</div>
<div class="t" style="left:1304.90px;top:432.00px;font-size:14px;color:#36c436;letter-spacing:-0.184px;">$41.00</div>
<div class="t" style="left:1192.30px;top:474.00px;font-size:14.4px;color:#dcdcdc;letter-spacing:0.152px;">Instrument</div>
<div class="t" style="left:1359.00px;top:474.00px;font-size:14.4px;color:#dcdcdc;transform:scaleX(0.8012);transform-origin:0 0;">TIF</div>
<div class="combo" style="left:1192px;top:498px;width:158px;height:26px;background:#9b9b9b"></div>
<div class="t" style="left:1200.30px;top:504.00px;font-size:14px;color:#787878;letter-spacing:-0.267px;">MNQ SEP23</div>
<div class="combo" style="left:1358px;top:498px;width:103px;height:26px"></div>
<div class="t" style="left:1366.30px;top:504.00px;font-size:14px;color:#dcdcdc;transform:scaleX(0.8629);transform-origin:0 0;">GTC</div>
<div class="t" style="left:1192.30px;top:534.00px;font-size:14.4px;color:#dcdcdc;letter-spacing:0.278px;">Account</div>
<div class="t" style="left:1358.00px;top:534.00px;font-size:14.4px;color:#dcdcdc;transform:scaleX(1.0496);transform-origin:0 0;">Order qty</div>
<div class="combo" style="left:1192px;top:557px;width:158px;height:26px"></div>
<div class="t" style="left:1200.30px;top:563.00px;font-size:14px;color:#dcdcdc;letter-spacing:0.026px;">Sim101</div>
<div class="combo" style="left:1358px;top:557px;width:103px;height:26px"></div>
<div class="t" style="left:1369.00px;top:563.00px;font-size:14px;color:#dcdcdc;">1</div>
<div class="t" style="left:1192.30px;top:594.00px;font-size:14.4px;color:#dcdcdc;letter-spacing:0.140px;">ATM Strategy</div>
<div class="combo" style="left:1192px;top:619px;width:269px;height:26px"></div>
<div class="t" style="left:1208.20px;top:624.00px;font-size:14px;color:#dcdcdc;transform:scaleX(1.0577);transform-origin:0 0;">None</div>
<div class="t" style="left:1192.30px;top:656.00px;font-size:14px;color:#dcdcdc;transform:scaleX(0.9374);transform-origin:0 0;">A:</div>
<div class="t" style="left:1214.10px;top:656.00px;font-size:14px;color:#dcdcdc;letter-spacing:-0.142px;">15159.00</div>
<div class="t" style="left:1341.00px;top:656.00px;font-size:14px;color:#dcdcdc;">8</div>
<div class="t" style="left:1192.30px;top:683.00px;font-size:14px;color:#dcdcdc;transform:scaleX(0.9374);transform-origin:0 0;">B:</div>
<div class="t" style="left:1214.10px;top:683.00px;font-size:14px;color:#dcdcdc;letter-spacing:-0.142px;">15158.50</div>
<div class="t" style="left:1341.60px;top:683.00px;font-size:14px;color:#dcdcdc;transform:scaleX(0.9632);transform-origin:0 0;">18</div>
<svg class="abs" style="left:0;top:0" width="1475" height="1055" viewBox="0 0 1475 1055"><path d="M1334.6 507.3l6.0 6.8l6.0 -6.8" fill="none" stroke="#7a7a7a" stroke-width="2.3"/><path d="M1445 507.3l6.0 6.8l6.0 -6.8" fill="none" stroke="#ececec" stroke-width="2.5"/><path d="M1334.6 566l6.0 6.8l6.0 -6.8" fill="none" stroke="#ececec" stroke-width="2.5"/><path d="M1445 628l6.0 6.8l6.0 -6.8" fill="none" stroke="#ececec" stroke-width="2.5"/><g fill="#d0d0d0"><path d="M1428 562.3h14v5h-14zM1429.3 563.6v2.4h11.4v-2.4z" fill-rule="evenodd"/><rect x="1428.00" y="568.60" width="2.7" height="2.4"/><rect x="1431.75" y="568.60" width="2.7" height="2.4"/><rect x="1435.50" y="568.60" width="2.7" height="2.4"/><rect x="1439.25" y="568.60" width="2.7" height="2.4"/><rect x="1428.00" y="572.00" width="2.7" height="2.4"/><rect x="1431.75" y="572.00" width="2.7" height="2.4"/><rect x="1435.50" y="572.00" width="2.7" height="2.4"/><rect x="1439.25" y="572.00" width="2.7" height="2.4"/><rect x="1428.00" y="575.40" width="2.7" height="2.4"/><rect x="1431.75" y="575.40" width="2.7" height="2.4"/><rect x="1435.50" y="575.40" width="2.7" height="2.4"/><rect x="1439.25" y="575.40" width="2.7" height="2.4"/></g><path d="M1448.2 568.2l4.5-5.4 4.5 5.4zM1448.2 572.8l4.5 5.4 4.5-5.4z" fill="#d8d8d8"/></svg>
<div class="abs" style="left:1467px;top:211px;width:1px;height:797px;background:#f2f2f2"></div>
<div class="abs" style="left:1468px;top:211px;width:1px;height:797px;background:#454547"></div>
<div class="abs" style="left:1469px;top:189px;width:6px;height:819px;background:#fdfdfd"></div>
<div class="abs" style="left:1469px;top:207px;width:5px;height:19px;background:#cfd8ea"></div>
<div class="abs" style="left:1469px;top:978px;width:6px;height:30px;background:linear-gradient(#e4e4e4,#f4f4f4 20%,#e0e0e0)"></div>
<div class="abs" style="left:1470px;top:193px;width:3px;height:6px;border-left:2px solid #5a2a8a;border-bottom:2px solid #5a2a8a;border-radius:0 0 0 3px"></div>
<div class="abs" style="left:0;top:1008px;width:1475px;height:47px;background:linear-gradient(90deg,#37352b 0%,#36342b 27.8%,#2d2c25 32%,#282828 37%,#262627 50%,#1f2024 62%,#1f2024 75%,#252628 85%,#2a2a2c 92%,#2a2a2c 100%)"></div>
<div class="abs" style="left:411px;top:1008px;width:61px;height:47px;background:#67655f"></div>
<div class="abs" style="left:1469px;top:1008px;width:1px;height:47px;background:#8a8a8a"></div>
<svg class="abs" style="left:0;top:1008px" width="1475" height="47" viewBox="0 1008 1475 47">
<defs>
<linearGradient id="bag" x1="0" y1="0" x2="0" y2="1"><stop offset="0" stop-color="#fbfbfb"/><stop offset="1" stop-color="#e2e2e4"/></linearGradient>
<linearGradient id="tg" x1="0" y1="0" x2="0" y2="1"><stop offset="0" stop-color="#33a6de"/><stop offset="1" stop-color="#1c88c6"/></linearGradient>
<linearGradient id="sun" x1="0" y1="0" x2="0" y2="1"><stop offset="0" stop-color="#fbbd12"/><stop offset="1" stop-color="#ee7d10"/></linearGradient>
<linearGradient id="cld" x1="0" y1="0" x2="0" y2="1"><stop offset="0" stop-color="#ffffff"/><stop offset="1" stop-color="#cfe0fa"/></linearGradient>
<linearGradient id="ga" x1="0" y1="0" x2="0" y2="1"><stop offset="0" stop-color="#b4ea30"/><stop offset="1" stop-color="#7cc010"/></linearGradient>
</defs>
<g fill="none" stroke="#f4f4f4" stroke-width="1.2"><path d="M-1 1024.6H7.8V1041.3H-1"/><path d="M-1 1028.4H5.3V1037.4H-1" stroke="#c8c8c8"/><path d="M13.6 1023V1042"/></g><rect x="12.1" y="1029.4" width="3" height="2.8" fill="#f4f4f4"/>
<path d="M61.9 1025V1021.2a1.6 1.6 0 0 1 1.6-1.6H73.4a1.6 1.6 0 0 1 1.6 1.6V1025" fill="none" stroke="#3aa2dc" stroke-width="2"/>
<path d="M54 1024.5a1.6 1.6 0 0 1 1.6-1.6H81.7a1.6 1.6 0 0 1 1.6 1.6V1043.5a4.5 4.5 0 0 1-4.5 4.5H58.5a4.5 4.5 0 0 1-4.5-4.5Z" fill="url(#bag)"/>
<rect x="63.4" y="1030.2" width="4.7" height="4.6" fill="#f25022"/><rect x="69.4" y="1030.2" width="4.7" height="4.6" fill="#7fba00"/><rect x="63.4" y="1036.1" width="4.7" height="4.5" fill="#00a4ef"/><rect x="69.4" y="1036.1" width="4.7" height="4.5" fill="#ffb900"/>
<path d="M115.8 1028.2L130.9 1018.9L146.2 1028.2Z" fill="#1565c0"/>
<rect x="115.8" y="1028" width="30.4" height="18.8" rx="1" fill="#28a8ea"/>
<path d="M118.8 1028.2H143.2L131.7 1036.6Z" fill="#f2f2f2"/>
<path d="M118.8 1028.2H143.2L139 1031.2H122.8Z" fill="#ffffff"/>
<path d="M131.4 1037L146.2 1028.6V1046.8H143Z" fill="#199be2" opacity="0.9"/>
<path d="M115.8 1029.5L144.5 1046.8H116.8a1 1 0 0 1-1-1Z" fill="#32b4f0" opacity="0.55"/>
<rect x="177.9" y="1017.8" width="30" height="30.3" rx="2" fill="#dbe7f8"/>
<rect x="182.6" y="1023.3" width="20" height="15.2" fill="#c6dbf2" stroke="#8ea9cc" stroke-width="1"/>
<rect x="188.2" y="1040.2" width="9.8" height="1.4" fill="#4a82c4"/>
<circle cx="199" cy="1037.3" r="3.7" fill="#ffffff"/><circle cx="199" cy="1037.3" r="2.9" fill="#f2414f"/>
<circle cx="254.7" cy="1033" r="13.5" fill="url(#tg)"/>
<path d="M246.6 1033.4L261.6 1027.0L258.6 1040.4L254.2 1037.0L251.9 1039.2L252.3 1035.6Z" fill="#ffffff"/><path d="M252.3 1035.6L258.6 1030.2L254.2 1037.0L251.9 1039.2Z" fill="#cfe3f2"/>
<path d="M303 1022a1.3 1.3 0 0 1 1.3-1.3H312.5L316.2 1023.2V1026H303Z" fill="#e8a718"/>
<rect x="303" y="1023" width="27.3" height="20" rx="1.2" fill="#fcd768"/>
<path d="M307.9 1043.8V1034.6a1.4 1.4 0 0 1 1.4-1.4H324.4a1.4 1.4 0 0 1 1.4 1.4V1043.8H321.5V1037.5H312.2V1043.8Z" fill="#3b97e6"/>
<circle cx="378.9" cy="1033" r="15.1" fill="#db4437"/>
<path d="M378.9 1033L391.98 1025.45A15.1 15.1 0 0 1 378.90 1048.10Z" fill="#ffcd40"/>
<path d="M378.9 1033L378.90 1048.10A15.1 15.1 0 0 1 365.82 1025.45Z" fill="#0f9d58"/>
<path d="M378.9 1033L365.82 1025.45A15.1 15.1 0 0 1 391.98 1025.45Z" fill="#db4437"/>
<path d="M378.90 1025.40L391.98 1025.45L393.50 1025.60L378.90 1025.40Z" fill="#db4437"/>
<path d="M385.48 1036.80L378.90 1048.10L386.30 1045.82Z" fill="#ffcd40"/>
<path d="M372.32 1036.80L365.82 1025.45L364.10 1033.00Z" fill="#0f9d58"/>
<circle cx="378.9" cy="1033" r="8.1" fill="#ffffff"/><circle cx="378.9" cy="1033" r="6.5" fill="#2f7be8"/>
<path d="M436.2 1035.0A9.6 9.6 0 1 1 447.5 1037.0" fill="none" stroke="#e23c10" stroke-width="3.6"/>
<path d="M441.8 1019.2L444.6 1019.8L444.2 1037.8L439.6 1036.8Z" fill="#f0f0f0"/><path d="M448.6 1026.8L450.4 1029.6L443.4 1038.4L441.4 1035.6Z" fill="#c2c2c4"/>
<circle cx="433.2" cy="1039.8" r="3.1" fill="none" stroke="#1b7ad0" stroke-width="3.4"/><circle cx="444" cy="1043.4" r="3.0" fill="none" stroke="#29a6ea" stroke-width="3.3"/>
<path d="M491.6 1024.6L514.4 1019.6V1039.2L493 1045.8Z" fill="#22241a" stroke="#a4c62a" stroke-width="1.8" stroke-linejoin="miter"/>
<path d="M503.4 1027.0L511.4 1031.2L506.9 1032.2V1036.9L501.6 1038.1V1033.4L496.0 1034.6Z" fill="url(#ga)"/>
<path d="M550 1023.2H580.1V1029.9H575V1042.3H562.2L550 1030.3Z" fill="#ff4a0c"/><rect x="550" y="1036" width="5.9" height="6.3" fill="#ff4a0c"/><path d="M562.4 1029.6H568.1V1034.8Z" fill="#2a2826"/><path d="M557.6 1024.4L563 1030" stroke="#8a2a10" stroke-width="0.7"/>
<circle cx="946.8" cy="1027.2" r="7.5" fill="url(#sun)"/>
<path d="M929.2 1045.6a5.6 5.6 0 0 1 -0.6 -11.1a8.6 8.6 0 0 1 16.4 -2.2a6.7 6.7 0 0 1 3.6 13.3Z" fill="url(#cld)"/>
<path d="M1152.2 1036.8L1160 1029.2L1167.8 1036.8" fill="none" stroke="#f2f2f2" stroke-width="1.4"/>
<g fill="none" stroke="#f2f2f2" stroke-width="1.3"><rect x="1184.6" y="1028.8" width="9.2" height="8.2" rx="1.6"/><path d="M1193.8 1032L1197.6 1029.6V1036.2L1193.8 1033.8"/><path d="M1185.4 1026.2Q1189.8 1023 1194.6 1026.2M1185.4 1039.6Q1189.8 1042.8 1194.6 1039.6" stroke-width="1"/></g>
<rect x="1214.8" y="1022.9" width="9" height="14.4" rx="4.2" fill="#f2f2f2"/><path d="M1213.2 1033.6a6.1 6.1 0 0 0 12.2 0M1219.3 1039.8V1042.4M1215.8 1042.6H1222.8" fill="none" stroke="#f2f2f2" stroke-width="1.2"/>
<rect x="1244.3" y="1028.7" width="14" height="9.8" fill="none" stroke="#f2f2f2" stroke-width="1.2"/><rect x="1246.3" y="1030.7" width="10" height="5.8" fill="#f2f2f2"/><rect x="1258.6" y="1031.6" width="1.6" height="4" fill="#f2f2f2"/><path d="M1240.6 1026.4V1029M1243.2 1026.4V1029M1239.8 1029H1244V1031.2a2.1 2.1 0 0 1 -4.2 0ZM1241.9 1033.3V1036.6H1244.3" fill="none" stroke="#f2f2f2" stroke-width="1.1"/>
<g fill="none" stroke="#f2f2f2" stroke-width="1.2"><path d="M1274.4 1025.7H1289.7V1037.4H1273.3"/><path d="M1277.5 1041.2H1285M1281.2 1037.4V1041.2"/><rect x="1270.8" y="1026" width="3.6" height="5.6"/><path d="M1272.6 1031.6V1041.2"/></g><rect x="1272" y="1027.4" width="1.3" height="1.6" fill="#f2f2f2"/>
<path d="M1300.4 1030.4H1303.2L1306.8 1026.8V1039.8L1303.2 1036.2H1300.4Z" fill="none" stroke="#f2f2f2" stroke-width="1.2"/><path d="M1309.8 1030.6Q1312 1033.3 1309.8 1036" fill="none" stroke="#8a8a8a" stroke-width="1.1"/><path d="M1312.8 1028Q1316.6 1033.3 1312.8 1038.6" fill="none" stroke="#6e6e6e" stroke-width="1.1"/><path d="M1315.8 1025.4Q1321.4 1033.3 1315.8 1041.2" fill="none" stroke="#5c5c5c" stroke-width="1.1"/>
<path d="M1424.6 1023.8H1443.8V1039.6H1437L1434.2 1042.4L1431.4 1039.6H1424.6Z" fill="none" stroke="#f2f2f2" stroke-width="1.3"/>
</svg>
<div class="t" style="left:612.60px;top:1012.00px;font-size:42.5px;color:#0b2a7c;font-weight:bold;font-family:'Liberation Serif',serif;transform:scaleX(0.815);transform-origin:0 0;">H</div>
<div class="t" style="left:615.60px;top:1017.00px;font-size:36px;color:#e39c30;font-weight:bold;font-family:'Liberation Serif',serif;transform:scaleX(0.76);transform-origin:0 0;">t</div>
<div class="t" style="left:965.20px;top:1025.00px;font-size:18px;color:#f6f6f6;transform:scaleX(0.8766);transform-origin:0 0;">77°F</div>
<div class="t" style="left:1009.20px;top:1025.00px;font-size:18px;color:#f6f6f6;letter-spacing:0.172px;">Mostly cloudy</div>
<div class="t" style="left:1340.00px;top:1015.00px;font-size:14.6px;color:#f6f6f6;letter-spacing:-0.028px;">9:31 AM</div>
<div class="t" style="left:1333.10px;top:1038.00px;font-size:14.6px;color:#f6f6f6;transform:scaleX(1.0361);transform-origin:0 0;">6/14/2023</div>
</div></body></html>
